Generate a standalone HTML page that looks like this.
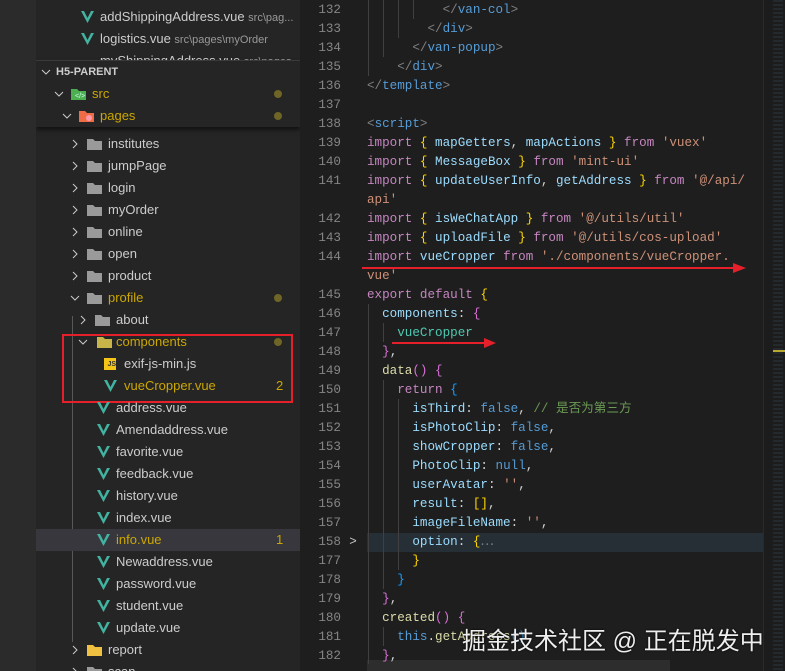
<!DOCTYPE html>
<html><head><meta charset="utf-8"><style>
*{margin:0;padding:0;box-sizing:border-box}
body{width:785px;height:671px;overflow:hidden;background:#1e1e1e;position:relative;font-family:"Liberation Sans",sans-serif}
.abs{position:absolute}
#act{left:0;top:0;width:36px;height:671px;background:#2b2b2b}
#side{left:36px;top:0;width:264px;height:671px;background:#252526;overflow:hidden}
.row{position:absolute;left:0;width:264px;height:22px;line-height:22px;font-size:13px;color:#cccccc;white-space:nowrap}
.row span.t{position:absolute}
.chev{position:absolute;top:6px;width:10px;height:10px}
.fold{position:absolute;top:5px;width:15px;height:12px}
.v{position:absolute;top:5px;width:13px;height:12px}
.dot{position:absolute;left:238px;top:7px;width:8px;height:8px;border-radius:50%;background:#6f6524}
.y{color:#cca700}
.code{position:absolute;left:367px;height:19px;line-height:19px;font-family:"Liberation Mono",monospace;font-size:12.6px;color:#d4d4d4;white-space:pre}
.ln{position:absolute;left:300px;width:41px;text-align:right;height:19px;line-height:19px;font-family:"Liberation Mono",monospace;font-size:12.6px;color:#858585}
.k{color:#c586c0}.i{color:#9cdcfe}.s{color:#ce9178}.b1{color:#ffd700}.b2{color:#da70d6}.b3{color:#179fff}
.g{color:#808080}.tg{color:#569cd6}.f{color:#dcdcaa}.c{color:#6a9955}.n{color:#569cd6}.cl{color:#4ec9b0}
.guide{position:absolute;width:1px;background:#404040}
</style></head><body>
<div id="act" class="abs"></div>
<div id="side" class="abs">
<div class="row" style="top:6px"><svg class="v" style="left:45px" viewBox="0 0 13 12"><polygon points="0,0 3,0 6.5,7 10,0 13,0 6.5,12" fill="#42b3a0"/></svg><span class="t" style="left:64px">addShippingAddress.vue <span style="font-size:11px;color:#999">src\pag...</span></span></div>
<div class="row" style="top:28px"><svg class="v" style="left:45px" viewBox="0 0 13 12"><polygon points="0,0 3,0 6.5,7 10,0 13,0 6.5,12" fill="#42b3a0"/></svg><span class="t" style="left:64px">logistics.vue <span style="font-size:11px;color:#999">src\pages\myOrder</span></span></div>
<div class="row" style="top:50px;height:11px;overflow:hidden"><span class="t" style="left:64px;top:0">myShippingAddress.vue <span style="font-size:11px;color:#999">src\pages</span></span></div>
<div class="abs" style="left:0;top:60px;width:264px;height:67px;background:#252526;box-shadow:0 3px 4px rgba(0,0,0,.5);border-top:1px solid #3a3a3a"></div>
<div class="row" style="top:61px;font-weight:bold;font-size:11px"><svg class="chev" style="left:5px" viewBox="0 0 10 10"><path d="M1 3l4 4 4-4" stroke="#ccc" fill="none"/></svg><span class="t" style="left:20px">H5-PARENT</span></div>
<div class="row" style="top:83px"><svg class="chev" style="left:18px" viewBox="0 0 10 10"><path d="M1 3l4 4 4-4" stroke="#ccc" fill="none"/></svg><svg class="fold" style="left:35px" viewBox="0 0 15 12"><path d="M0 1h6l2 2h7v9H0z" fill="#4caf50"/><text x="4" y="10" font-size="7" fill="#cfe">&lt;/&gt;</text></svg><span class="t y" style="left:56px">src</span><div class="dot"></div></div>
<div class="row" style="top:105px"><svg class="chev" style="left:26px" viewBox="0 0 10 10"><path d="M1 3l4 4 4-4" stroke="#ccc" fill="none"/></svg><svg class="fold" style="left:43px" viewBox="0 0 15 12"><path d="M0 1h6l2 2h7v9H0z" fill="#ef6c47"/><circle cx="10" cy="8" r="3" fill="#f9a"/></svg><span class="t y" style="left:64px">pages</span><div class="dot"></div></div>
<div id="flist"></div>
<div class="abs" style="left:36px;top:316px;width:1px;height:326px;background:#585858"></div>
<div class="abs" style="left:0;top:529px;width:264px;height:22px;background:#37373d"></div>
</div>
<div class="abs" style="left:62px;top:334px;width:231px;height:69px;border:2px solid #e5202a"></div>

<div class="abs" style="left:367px;top:533px;width:396px;height:19px;background:#262f36"></div>
<div class="abs" style="left:367px;top:660px;width:303px;height:11px;background:#2d2d2d"></div>
<div class="abs" style="left:763px;top:0;width:22px;height:671px;background:#1c1c1c;border-left:1px solid #2a2a2a"></div>
<div class="abs" style="left:773px;top:0;width:10px;height:671px;background:repeating-linear-gradient(#2f3d4a 0 2px,#1c1c1c 2px 4px);opacity:.4"></div>
<div class="abs" style="left:773px;top:350px;width:12px;height:2px;background:#b8a830"></div>
<div class="guide" style="left:368px;top:0;height:76px"></div>
<div class="guide" style="left:383px;top:0;height:57px"></div>
<div class="guide" style="left:398px;top:0;height:38px"></div>
<div class="guide" style="left:413px;top:0;height:19px"></div>
<div class="guide" style="left:368px;top:304px;height:360px"></div>
<div class="guide" style="left:383px;top:323px;height:19px"></div>
<div class="guide" style="left:383px;top:380px;height:209px"></div>
<div class="guide" style="left:398px;top:399px;height:171px"></div>
<div class="guide" style="left:383px;top:627px;height:19px"></div>
<div class="ln" style="top:533px;left:343px;width:20px;text-align:center;color:#c5c5c5">&gt;</div>
<div id="code"></div>

<svg class="abs" style="left:0;top:0" width="785" height="671">
<line x1="362" y1="268" x2="735" y2="268" stroke="#e5202a" stroke-width="2"/>
<polygon points="733,263 746,268 733,273" fill="#e5202a"/>
<line x1="392" y1="343" x2="486" y2="343" stroke="#e5202a" stroke-width="2"/>
<polygon points="484,338 496,343 484,348" fill="#e5202a"/>
</svg>
<div class="abs" style="left:462px;top:621px;font-family:'Liberation Sans','Noto Sans CJK SC',sans-serif;font-size:24px;color:#eee;white-space:nowrap;text-shadow:0 0 2px #000">掘金技术社区 @ 正在脱发中</div>

<script>
var V='<polygon points="0,0 3,0 6.5,7 10,0 13,0 6.5,12" fill="#42b3a0"/>';
function chev(x,open){return '<svg class="chev" style="left:'+x+'px" viewBox="0 0 10 10"><path d="'+(open?'M1 3l4 4 4-4':'M3 1l4 4-4 4')+'" stroke="#ccc" fill="none"/></svg>';}
function fold(x,col){return '<svg class="fold" style="left:'+x+'px" viewBox="0 0 15 12"><path d="M0 1h6l2 2h7v9H0z" fill="'+(col||'#9a9a9a')+'"/></svg>';}
var h='';
var folders=['institutes','jumpPage','login','myOrder','online','open','product'];
folders.forEach(function(n,i){var t=133+22*i;h+='<div class="row" style="top:'+t+'px">'+chev(34)+fold(51)+'<span class="t" style="left:72px">'+n+'</span></div>';});
h+='<div class="row" style="top:287px">'+chev(34,1)+fold(51)+'<span class="t y" style="left:72px">profile</span><div class="dot"></div></div>';
h+='<div class="row" style="top:309px">'+chev(42)+fold(59)+'<span class="t" style="left:80px">about</span></div>';
h+='<div class="row" style="top:331px">'+chev(42,1)+fold(61,'#c9b44a')+'<span class="t y" style="left:80px">components</span><div class="dot"></div></div>';
h+='<div class="row" style="top:353px"><div style="position:absolute;left:68px;top:5px;width:12px;height:12px;background:#f5c518;font-size:7px;line-height:14px;text-align:right;color:#333;font-weight:bold">JS</div><span class="t" style="left:88px">exif-js-min.js</span></div>';
h+='<div class="row" style="top:375px"><svg class="v" style="left:68px" viewBox="0 0 13 12">'+V+'</svg><span class="t y" style="left:88px">vueCropper.vue</span><span class="t y" style="left:240px">2</span></div>';
var files=['address.vue','Amendaddress.vue','favorite.vue','feedback.vue','history.vue','index.vue','info.vue','Newaddress.vue','password.vue','student.vue','update.vue'];
files.forEach(function(n,i){var t=397+22*i;var yy=n=='info.vue';h+='<div class="row" style="top:'+t+'px;z-index:2"><svg class="v" style="left:61px" viewBox="0 0 13 12">'+V+'</svg><span class="t'+(yy?' y':'')+'" style="left:80px">'+n+'</span>'+(yy?'<span class="t y" style="left:240px">1</span>':'')+'</div>';});
h+='<div class="row" style="top:639px">'+chev(34)+fold(51,'#f0c040')+'<span class="t" style="left:72px">report</span></div>';
h+='<div class="row" style="top:661px">'+chev(34)+fold(51)+'<span class="t" style="left:72px">scan</span></div>';
document.getElementById('flist').innerHTML=h;

var L=[
['132','          <span class="g">&lt;/</span><span class="tg">van-col</span><span class="g">&gt;</span>'],
['133','        <span class="g">&lt;/</span><span class="tg">div</span><span class="g">&gt;</span>'],
['134','      <span class="g">&lt;/</span><span class="tg">van-popup</span><span class="g">&gt;</span>'],
['135','    <span class="g">&lt;/</span><span class="tg">div</span><span class="g">&gt;</span>'],
['136','<span class="g">&lt;/</span><span class="tg">template</span><span class="g">&gt;</span>'],
['137',''],
['138','<span class="g">&lt;</span><span class="tg">script</span><span class="g">&gt;</span>'],
['139','<span class="k">import</span> <span class="b1">{</span> <span class="i">mapGetters</span>, <span class="i">mapActions</span> <span class="b1">}</span> <span class="k">from</span> <span class="s">\'vuex\'</span>'],
['140','<span class="k">import</span> <span class="b1">{</span> <span class="i">MessageBox</span> <span class="b1">}</span> <span class="k">from</span> <span class="s">\'mint-ui\'</span>'],
['141','<span class="k">import</span> <span class="b1">{</span> <span class="i">updateUserInfo</span>, <span class="i">getAddress</span> <span class="b1">}</span> <span class="k">from</span> <span class="s">\'@/api/</span>'],
['','<span class="s">api\'</span>'],
['142','<span class="k">import</span> <span class="b1">{</span> <span class="i">isWeChatApp</span> <span class="b1">}</span> <span class="k">from</span> <span class="s">\'@/utils/util\'</span>'],
['143','<span class="k">import</span> <span class="b1">{</span> <span class="i">uploadFile</span> <span class="b1">}</span> <span class="k">from</span> <span class="s">\'@/utils/cos-upload\'</span>'],
['144','<span class="k">import</span> <span class="i">vueCropper</span> <span class="k">from</span> <span class="s">\'./components/vueCropper.</span>'],
['','<span class="s">vue\'</span>'],
['145','<span class="k">export</span> <span class="k">default</span> <span class="b1">{</span>'],
['146','  <span class="i">components</span>: <span class="b2">{</span>'],
['147','    <span class="cl">vueCropper</span>'],
['148','  <span class="b2">}</span>,'],
['149','  <span class="f">data</span><span class="b2">()</span> <span class="b2">{</span>'],
['150','    <span class="k">return</span> <span class="b3">{</span>'],
['151','      <span class="i">isThird</span>: <span class="n">false</span>, <span class="c">// 是否为第三方</span>'],
['152','      <span class="i">isPhotoClip</span>: <span class="n">false</span>,'],
['153','      <span class="i">showCropper</span>: <span class="n">false</span>,'],
['154','      <span class="i">PhotoClip</span>: <span class="n">null</span>,'],
['155','      <span class="i">userAvatar</span>: <span class="s">\'\'</span>,'],
['156','      <span class="i">result</span>: <span class="b1">[]</span>,'],
['157','      <span class="i">imageFileName</span>: <span class="s">\'\'</span>,'],
['158','      <span class="i">option</span>: <span class="b1">{</span><span class="g">\u22ef</span>'],
['177','      <span class="b1">}</span>'],
['178','    <span class="b3">}</span>'],
['179','  <span class="b2">}</span>,'],
['180','  <span class="f">created</span><span class="b2">()</span> <span class="b2">{</span>'],
['181','    <span class="n">this</span>.<span class="f">getAddress</span><span class="b3">()</span>'],
['182','  <span class="b2">}</span>,']
];
var c='';
L.forEach(function(l,i){var t=1+19*i;c+='<div class="ln" style="top:'+t+'px">'+l[0]+'</div><div class="code" style="top:'+t+'px;font-family:\'Liberation Mono\',\'Noto Sans CJK SC\',monospace">'+l[1]+'</div>';});
document.getElementById('code').innerHTML=c;
</script>
</body></html>
